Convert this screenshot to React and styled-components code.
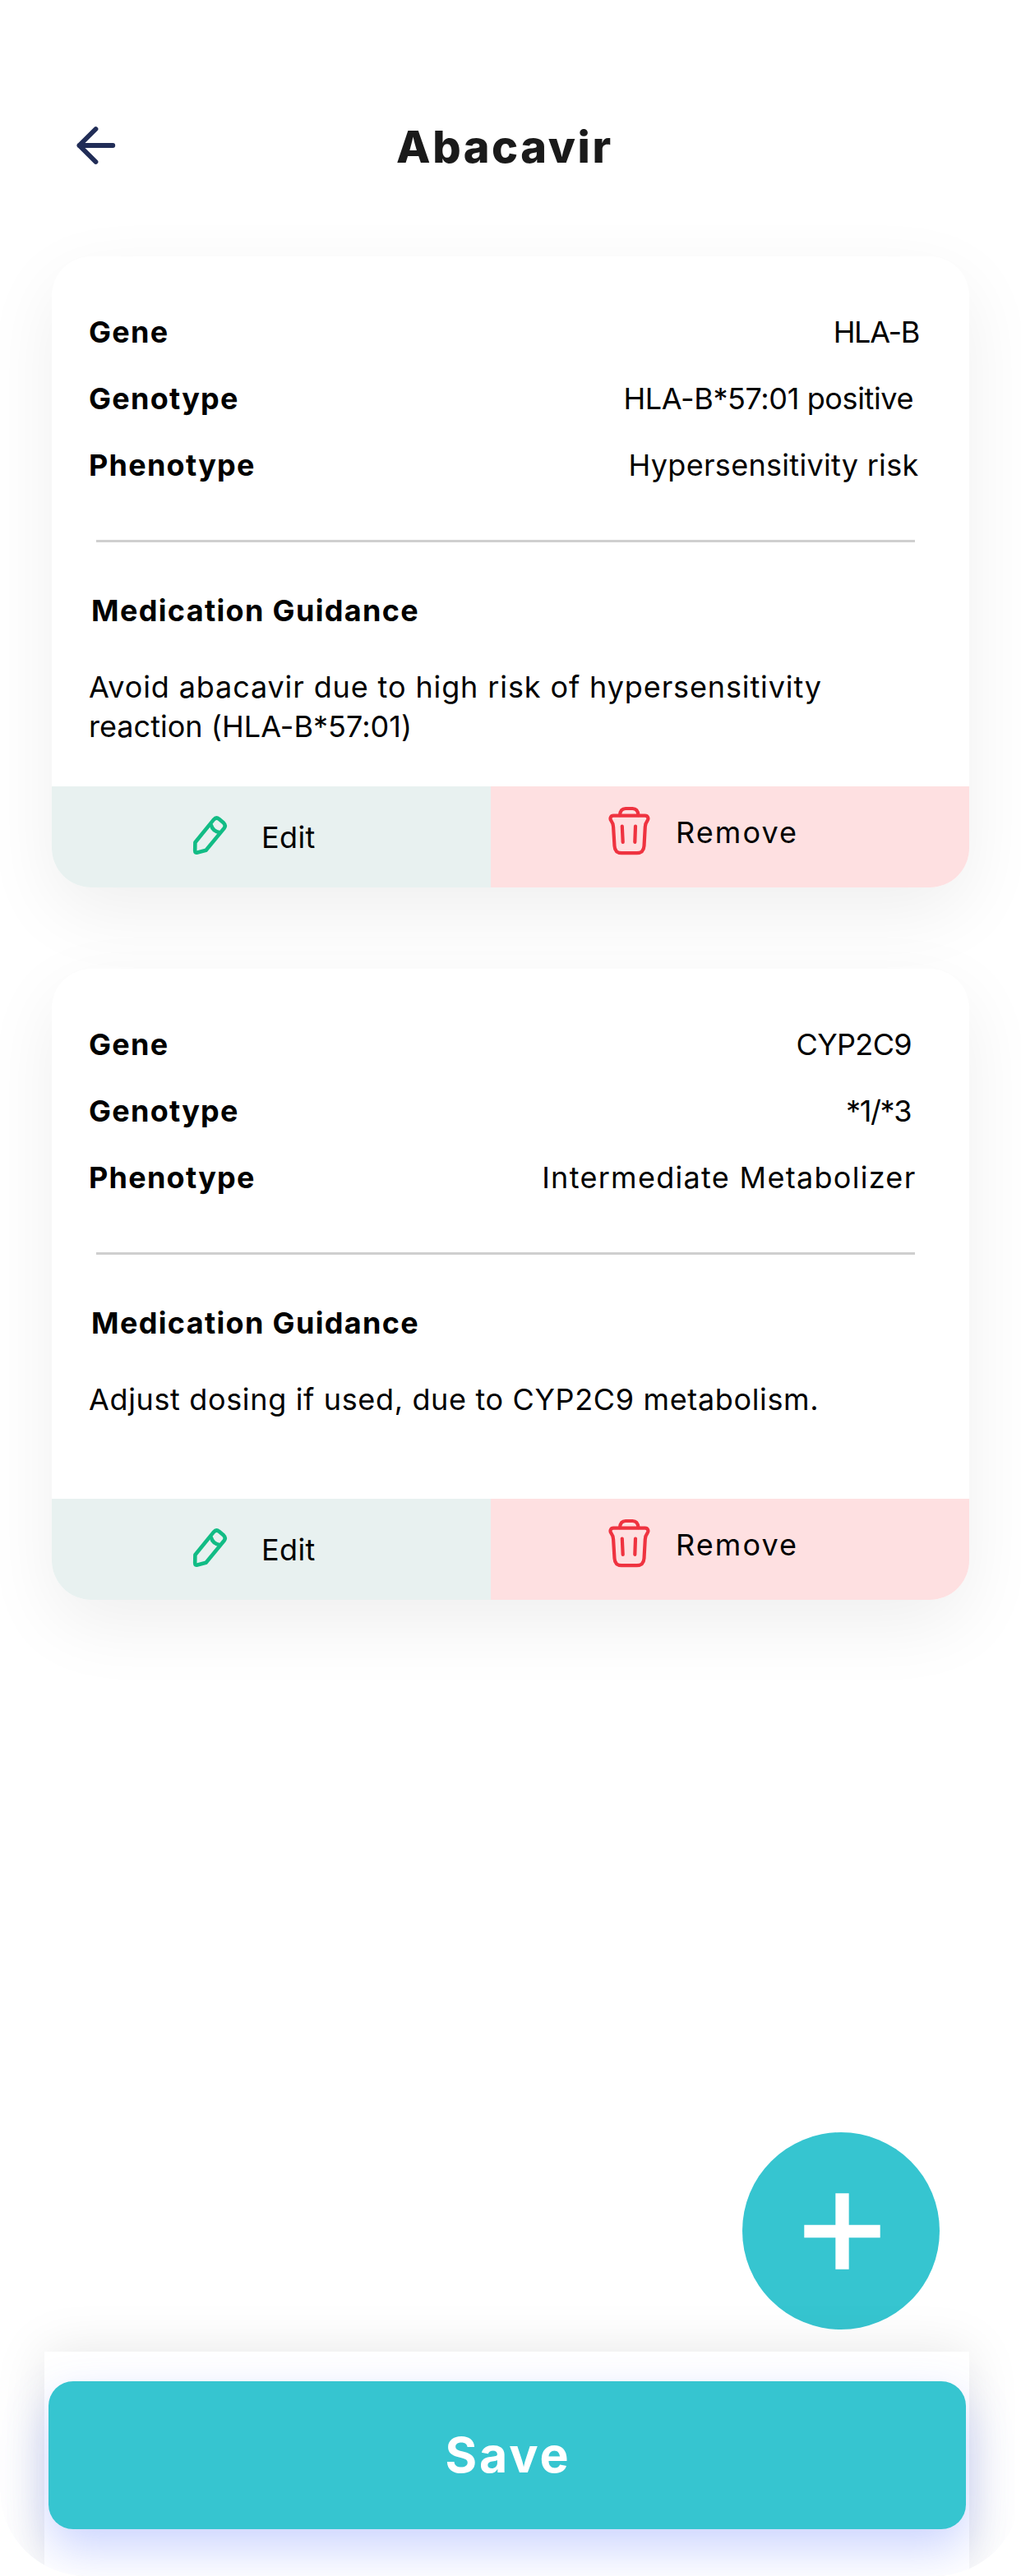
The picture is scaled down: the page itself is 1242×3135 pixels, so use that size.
import React from "react";
import styled, { createGlobalStyle } from "styled-components";

const GlobalStyle = createGlobalStyle`
  * {
    box-sizing: border-box;
  }

  body {
    margin: 0;
    background: #fff;
    font-family: Inter, "Open Sans", sans-serif;
  }

  button {
    margin: 0;
    border: 0;
    font: inherit;
    color: inherit;
    text-align: left;
    cursor: pointer;
  }

  svg {
    display: block;
    flex: none;
  }
`;

const Screen = styled.div`
  display: flex;
  flex-direction: column;
  width: 1242px;
  height: 3135px;
  overflow: hidden;
  border-radius: 105px;
  background: #fff;
  color: #000;
`;

const Header = styled.header`
  display: flex;
  align-items: flex-start;
  height: 312px;
  padding: 147px 90px 0;
`;

const BackButton = styled.button`
  display: flex;
  align-items: flex-start;
  width: 56px;
  height: 60px;
  padding: 4px 0 0;
  background: none;
`;

const Title = styled.h1`
  margin: 0 0 0 336px;
  color: #1a1a1a;
  font-size: 54px;
  font-weight: 800;
  line-height: 64px;
  letter-spacing: 2.6px;
`;

const CardList = styled.main`
  display: flex;
  flex-direction: column;
  gap: 99px;
  padding: 0 63px;
`;

const Card = styled.article`
  display: flex;
  flex-direction: column;
  height: 768px;
  border-radius: 48px;
  background: #fff;
  box-shadow: 0 30px 90px rgba(0, 0, 0, 0.065);
  font-size: 36px;
  line-height: 48px;
`;

const CardBody = styled.div`
  height: 645px;
  padding-top: 52px;
`;

const Row = styled.div`
  display: flex;
  justify-content: space-between;
  height: 81px;
  padding-left: 45px;
  padding-right: ${(p) => p.$inset}px;
  line-height: 81px;
  white-space: nowrap;
`;

const Label = styled.span`
  font-weight: 700;
  letter-spacing: 1.25px;
`;

const Value = styled.span`
  letter-spacing: ${(p) => p.$tracking}px;
`;

const Divider = styled.hr`
  height: 3px;
  margin: 50px 66px 0 54px;
  border: 0;
  background: #cfcfcf;
`;

const SectionTitle = styled.h2`
  margin: 59px 0 45px 48px;
  font-size: 36px;
  font-weight: 700;
  line-height: 48px;
  letter-spacing: 1.34px;
`;

const Guidance = styled.p`
  margin: 0 45px;
  white-space: nowrap;
`;

const GuidanceLine = styled.span`
  display: block;
  letter-spacing: ${(p) => p.$tracking}px;
`;

const Actions = styled.div`
  display: flex;
  height: 123px;
  border-radius: 0 0 48px 48px;
  overflow: hidden;
`;

const EditButton = styled.button`
  display: flex;
  align-items: flex-start;
  gap: 38px;
  width: 534px;
  padding: 33px 0 0 169px;
  background: #e8f1f0;
  letter-spacing: 0.4px;
`;

const RemoveButton = styled.button`
  display: flex;
  align-items: flex-start;
  gap: 28px;
  flex: 1;
  padding: 21px 0 0 141px;
  background: #fee0e1;
  letter-spacing: 2.1px;
`;

const ActionText = styled.span`
  padding-top: ${(p) => p.$drop}px;
`;

const AddButton = styled.button`
  display: flex;
  align-items: center;
  justify-content: center;
  flex: none;
  width: 240px;
  height: 240px;
  margin: 648px 0 27px 903px;
  padding: 0 0 0 3px;
  border-radius: 50%;
  background: #36c5d0;
`;

const Footer = styled.footer`
  flex: none;
  width: 1125px;
  height: 273px;
  margin-left: 54px;
  padding: 36px 4.5px 0;
  background: #fff;
  box-shadow: 0 0 60px rgba(0, 0, 0, 0.1);
`;

const SaveButton = styled.button`
  display: flex;
  align-items: center;
  justify-content: center;
  width: 100%;
  height: 180px;
  padding: 0 0 0 3px;
  border-radius: 30px;
  background: #36c5d0;
  box-shadow: 0 24px 56px rgba(76, 106, 255, 0.29);
  color: #fff;
  font-size: 59px;
  font-weight: 650;
  line-height: 70px;
  letter-spacing: 2.9px;
`;

const ArrowLeftIcon = () => (
  <svg width="56" height="52" viewBox="0 0 56 52" fill="none" stroke="#212d57" strokeWidth="5.8" strokeLinecap="round" strokeLinejoin="round">
    <path d="M47.3 26H6.4M26.5 6 6.4 26l20.1 20" />
  </svg>
);

const PencilIcon = () => (
  <svg width="48" height="54" viewBox="0 0 48 54" fill="none" stroke="#12bc85" strokeWidth="4.6" strokeLinecap="round" strokeLinejoin="round">
    <path d="M5.4 35.2 28 7.4Q31 3.9 34.5 6.7l5.6 4.9Q43.2 14.6 40.6 18L18.6 44.8 8.2 47.5Q5.2 48.3 5.2 45.2Z" />
    <path d="M25 14.5Q26.6 21.3 35.3 23.2" />
  </svg>
);

const TrashIcon = () => (
  <svg width="56" height="66" viewBox="0 0 56 66" fill="none" stroke="#ef3340" strokeWidth="4.2" strokeLinecap="round" strokeLinejoin="round">
    <path d="M16 14.2C16.4 8.8 18.7 6 23 6h8.5c4.3 0 6.6 2.8 7 8.2" />
    <path d="M8.3 14.7h38.3c3.7 0 4.7 3.5 2.9 6-1.7 2.3-2.6 4.7-2.7 7.6L45.5 51.5c-.4 5.5-3.6 8.7-8.8 8.7H18.1c-5.2 0-8.3-3.2-8.6-8.7L8.1 28.3c-.1-2.9-1-5.3-2.7-7.6-1.8-2.5-.8-6 2.9-6Z" />
    <path d="m18.8 27.5.9 19.3M35 27.5l-.7 19.3" />
  </svg>
);

const PlusIcon = () => (
  <svg width="93" height="93" viewBox="0 0 93 93" fill="none" stroke="#fff">
    <path strokeWidth="15.3" d="M.3 46.5h92.4" />
    <path strokeWidth="16.3" d="M46.5.2v92.6" />
  </svg>
);

const records = [
  {
    id: "hla-b",
    fields: [
      { label: "Gene", value: "HLA-B", inset: 61, tracking: -1.3 },
      { label: "Genotype", value: "HLA-B*57:01 positive", inset: 68, tracking: -0.38 },
      { label: "Phenotype", value: "Hypersensitivity risk", inset: 61.5, tracking: 0.3 },
    ],
    guidance: [
      { text: "Avoid abacavir due to high risk of hypersensitivity", tracking: 0.88 },
      { text: "reaction (HLA-B*57:01)", tracking: 0.03 },
    ],
  },
  {
    id: "cyp2c9",
    fields: [
      { label: "Gene", value: "CYP2C9", inset: 70, tracking: -0.65 },
      { label: "Genotype", value: "*1/*3", inset: 71, tracking: -1.4 },
      { label: "Phenotype", value: "Intermediate Metabolizer", inset: 64.5, tracking: 1.3 },
    ],
    guidance: [
      { text: "Adjust dosing if used, due to CYP2C9 metabolism.", tracking: 0.645 },
    ],
  },
];

const RecordCard = ({ record }) => (
  <Card>
    <CardBody>
      {record.fields.map((field) => (
        <Row key={field.label} $inset={field.inset}>
          <Label>{field.label}</Label>
          <Value $tracking={field.tracking}>{field.value}</Value>
        </Row>
      ))}
      <Divider />
      <SectionTitle>Medication Guidance</SectionTitle>
      <Guidance>
        {record.guidance.map((line) => (
          <GuidanceLine key={line.text} $tracking={line.tracking}>
            {line.text}
          </GuidanceLine>
        ))}
      </Guidance>
    </CardBody>
    <Actions>
      <EditButton type="button">
        <PencilIcon />
        <ActionText $drop={5}>Edit</ActionText>
      </EditButton>
      <RemoveButton type="button">
        <TrashIcon />
        <ActionText $drop={11}>Remove</ActionText>
      </RemoveButton>
    </Actions>
  </Card>
);

export default function App() {
  return (
    <Screen>
      <GlobalStyle />
      <Header>
        <BackButton type="button" aria-label="Back">
          <ArrowLeftIcon />
        </BackButton>
        <Title>Abacavir</Title>
      </Header>
      <CardList>
        {records.map((record) => (
          <RecordCard key={record.id} record={record} />
        ))}
      </CardList>
      <AddButton type="button" aria-label="Add">
        <PlusIcon />
      </AddButton>
      <Footer>
        <SaveButton type="button">Save</SaveButton>
      </Footer>
    </Screen>
  );
}
